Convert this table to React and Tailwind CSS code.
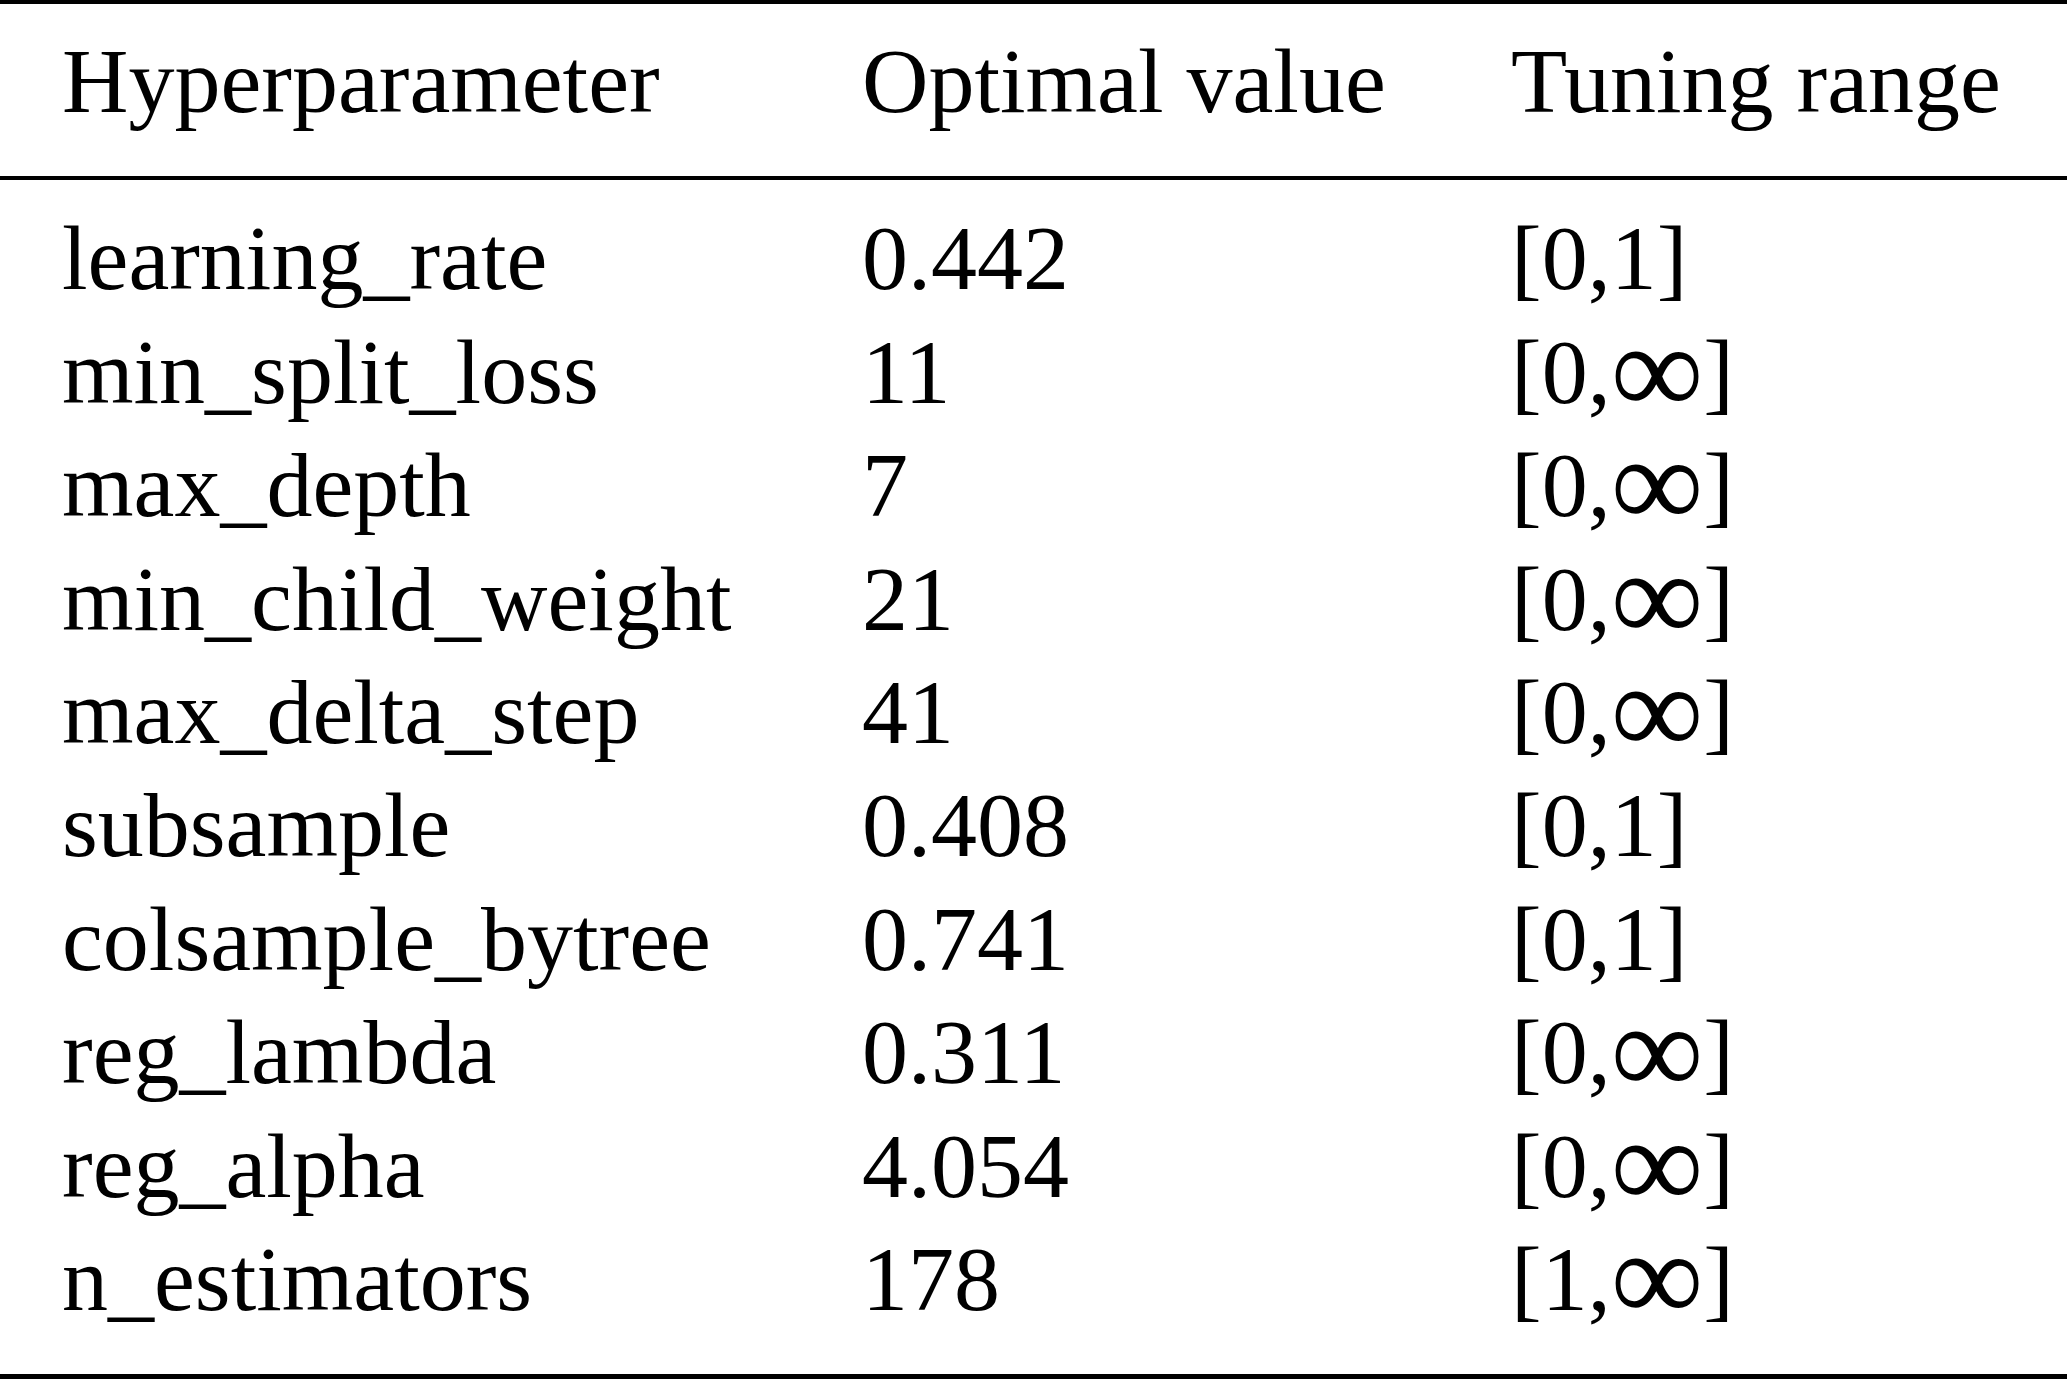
import React from 'react';

const Inf = () => <span className="text-[130px] leading-[0] align-[-11px]">{'\u221E'}</span>;

const rows = [
  ['learning_rate', '0.442', '[0,1]'],
  ['min_split_loss', '11', <>[0,<Inf />]</>],
  ['max_depth', '7', <>[0,<Inf />]</>],
  ['min_child_weight', '21', <>[0,<Inf />]</>],
  ['max_delta_step', '41', <>[0,<Inf />]</>],
  ['subsample', '0.408', '[0,1]'],
  ['colsample_bytree', '0.741', '[0,1]'],
  ['reg_lambda', '0.311', <>[0,<Inf />]</>],
  ['reg_alpha', '4.054', <>[0,<Inf />]</>],
  ['n_estimators', '178', <>[1,<Inf />]</>],
];

const Row = ({ cells }) => (
  <div className="grid grid-cols-[800px_649px_1fr] pl-[62px] leading-[113.4px] whitespace-nowrap">
    {cells.map((c, i) => (
      <div key={i}>{c}</div>
    ))}
  </div>
);

const App = () => {
  return (
    <div className="w-[2067px] h-[1379px] bg-white text-black overflow-hidden font-['Liberation_Serif','Times_New_Roman',serif] text-[92px]">
      <div className="h-[4px] bg-black" />
      <div className="pt-[21px] pb-[38px]">
        <Row cells={['Hyperparameter', 'Optimal value', 'Tuning range']} />
      </div>
      <div className="h-[4px] bg-black" />
      <div className="pt-[22px] pb-[38px]">
        {rows.map((r) => (
          <Row key={r[0]} cells={r} />
        ))}
      </div>
      <div className="h-[5px] bg-black" />
    </div>
  );
};

export default App;
